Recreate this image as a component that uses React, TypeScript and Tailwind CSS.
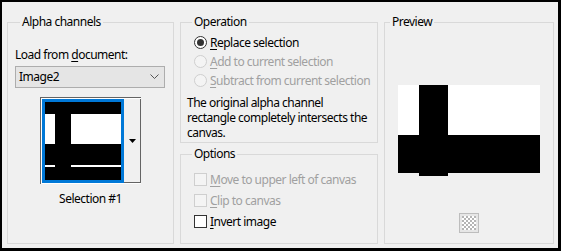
import React from 'react';

const font = { fontFamily: '"Noto Sans", "Liberation Sans", sans-serif' };

function Radio({ accel, rest, checked, disabled }: { accel: string; rest: string; checked?: boolean; disabled?: boolean }) {
  return (
    <div className="flex items-center h-[19px] whitespace-nowrap">
      <span
        className={`w-[13px] h-[13px] shrink-0 rounded-full border flex items-center justify-center ${
          disabled ? 'border-[#cfcfcf] bg-[#f4f4f4]' : 'border-[#333] bg-white'
        }`}
      >
        {checked && <span className="w-[7px] h-[7px] rounded-full bg-[#333]" />}
      </span>
      <span className={`ml-[3px] ${disabled ? 'text-[#a0a0a0]' : 'text-black'}`}>
        <span className="underline underline-offset-2">{accel}</span>
        {rest}
      </span>
    </div>
  );
}

function Check({ accel, rest, disabled }: { accel: string; rest: string; disabled?: boolean }) {
  return (
    <div className="flex items-center h-[21px] whitespace-nowrap">
      <span className={`w-[13px] h-[13px] shrink-0 border ${disabled ? 'border-[#cfcfcf] bg-[#f4f4f4]' : 'border-[#333] bg-white'}`} />
      <span className={`ml-[3px] ${disabled ? 'text-[#a0a0a0]' : 'text-black'}`}>
        <span className="underline underline-offset-2">{accel}</span>
        {rest}
      </span>
    </div>
  );
}

export default function App() {
  return (
    <div
      className="w-[561px] h-[251px] bg-[#f0f0f0] border-t-2 border-l-2 border-r-[3px] border-b-[3px] border-black flex gap-[6px] pl-[5px] pr-[4px] pt-[12px] pb-[4px] text-[12px] leading-[16px] tracking-[-0.5px] text-black"
      style={font}
    >
      {/* Alpha channels */}
      <fieldset className="w-[167px] border border-[#d9d9d9] px-[7px] pb-0">
        <legend className="ml-[5px] px-[2px]">Alpha channels</legend>
        <div className="mt-[17px]">
          Load from <span className="underline underline-offset-2">d</span>ocument:
        </div>
        <div className="mt-[3px] h-[22px] w-[150px] border border-[#adadad] bg-[#e5e5e5] flex items-center justify-between pl-[3px] pr-[5px]">
          <span>Image2</span>
          <svg width="9" height="6" viewBox="0 0 9 6" className="text-[#555]">
            <path d="M0.5 0.5 L4.5 4.5 L8.5 0.5" fill="none" stroke="currentColor" strokeWidth="1" />
          </svg>
        </div>
        <div className="mt-[9px] ml-[25px] w-[101px] h-[87px] flex border-t border-l border-[#646464] bg-white">
          <div className="w-[82px] h-[84px] mt-[1px] ml-[1px] border-[3px] border-[#0078d7] bg-black">
            <svg width="76" height="78" viewBox="0 0 76 78" className="block">
              <rect x="0" y="12" width="10" height="30" fill="#fff" />
              <rect x="26" y="12" width="50" height="30" fill="#fff" />
              <rect x="0" y="63" width="10" height="2" fill="#fff" />
              <rect x="26" y="63" width="50" height="2" fill="#fff" />
            </svg>
          </div>
          <div className="flex-1 h-[84px] mt-[1px] border-r border-b border-[#646464] bg-[#f0f0f0] flex items-center justify-center">
            <svg width="7" height="4" viewBox="0 0 7 4">
              <path d="M0 0 H7 L3.5 4 Z" fill="#000" />
            </svg>
          </div>
        </div>
        <div className="mt-[7px] text-center">Selection #1</div>
      </fieldset>

      {/* Operation + Options */}
      <div className="w-[198px] flex flex-col gap-[3px]">
        <fieldset className="h-[129px] border border-[#d9d9d9] px-[6px]">
          <legend className="ml-[5px] px-[2px]">Operation</legend>
          <div className="mt-[3px] pl-[7px]">
            <Radio accel="R" rest="eplace selection" checked />
            <Radio accel="A" rest="dd to current selection" disabled />
            <Radio accel="S" rest="ubtract from current selection" disabled />
          </div>
          <p className="mt-[5px] leading-[15px]">
            The original alpha channel rectangle completely intersects the canvas.
          </p>
        </fieldset>
        <fieldset className="flex-1 border border-[#d9d9d9] px-[6px]">
          <legend className="ml-[5px] px-[2px]">Options</legend>
          <div className="mt-[7px] pl-[7px]">
            <Check accel="M" rest="ove to upper left of canvas" disabled />
            <Check accel="C" rest="lip to canvas" disabled />
            <Check accel="I" rest="nvert image" />
          </div>
        </fieldset>
      </div>

      {/* Preview */}
      <fieldset className="w-[170px] border border-[#d9d9d9] flex flex-col items-center">
        <legend className="ml-[5px] px-[2px]">Preview</legend>
        <svg width="142" height="91" viewBox="0 0 142 91" className="mt-[55px] block">
          <rect x="0" y="0" width="142" height="88" fill="#fff" />
          <rect x="0" y="50" width="142" height="38" fill="#000" />
          <rect x="21" y="0" width="29" height="91" fill="#000" />
        </svg>
        <div className="mt-[37px] w-[20px] h-[20px] border border-[#bdbdbd] bg-[#e6e6e6] p-[2px]">
          <svg width="14" height="14" viewBox="0 0 14 14" className="block">
            <rect width="14" height="14" fill="#fff" />
            {[0, 1, 2, 3, 4, 5, 6].map((r) =>
              [0, 1, 2, 3, 4, 5, 6].map((c) =>
                (r + c) % 2 === 0 ? <rect key={`${r}-${c}`} x={c * 2} y={r * 2} width="2" height="2" fill="#b5b5b5" /> : null
              )
            )}
          </svg>
        </div>
      </fieldset>
    </div>
  );
}
